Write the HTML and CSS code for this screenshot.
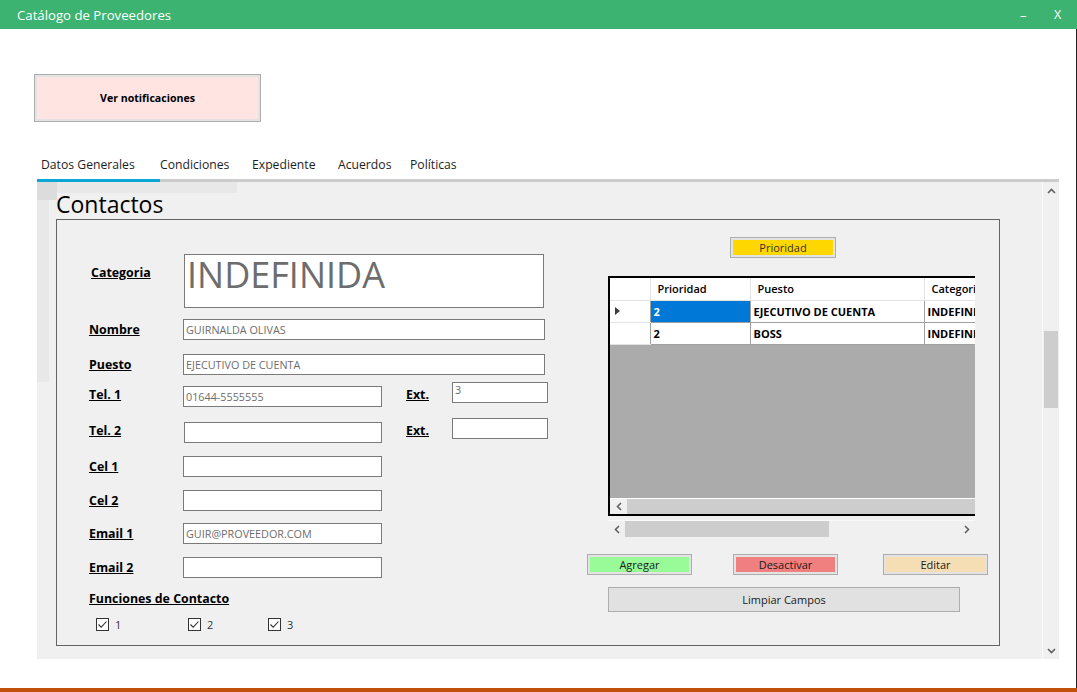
FILE: index.html
```html
<!DOCTYPE html>
<html lang="es">
<head>
<meta charset="utf-8">
<title>Catálogo de Proveedores</title>
<link rel="stylesheet" href="styles.css">
</head>
<body>
<div class="window">
  <header class="titlebar">
    <span class="title">Catálogo de Proveedores</span>
    <span class="win-min">–</span>
    <span class="win-close">X</span>
  </header>
  <main class="client">
    <button class="btn notif">Ver notificaciones</button>
    <nav class="tabs">
      <span class="tab tab-1 active">Datos Generales</span>
      <span class="tab tab-2">Condiciones</span>
      <span class="tab tab-3">Expediente</span>
      <span class="tab tab-4">Acuerdos</span>
      <span class="tab tab-5">Políticas</span>
    </nav>
    <section class="tabpage">
      <div class="page">
        <h2 class="group-title">Contactos</h2>
        <div class="groupbox">
          <div class="form">
            <div class="row row-cat">
              <span class="lbl lbl-cat">Categoria</span>
              <div class="catbox">INDEFINIDA</div>
            </div>
            <div class="row r-nombre">
              <span class="lbl">Nombre</span>
              <div class="input w-long">GUIRNALDA OLIVAS</div>
            </div>
            <div class="row r-puesto">
              <span class="lbl">Puesto</span>
              <div class="input w-long">EJECUTIVO DE CUENTA</div>
            </div>
            <div class="row row-tel r-tel1">
              <span class="lbl">Tel. 1</span>
              <div class="input w-short tel">01644-5555555</div>
              <span class="lbl lbl-ext">Ext.</span>
              <div class="input w-ext">3</div>
            </div>
            <div class="row row-tel r-tel2">
              <span class="lbl">Tel. 2</span>
              <div class="input w-short tel tel2"></div>
              <span class="lbl lbl-ext">Ext.</span>
              <div class="input w-ext"></div>
            </div>
            <div class="row r-cel1">
              <span class="lbl">Cel 1</span>
              <div class="input w-short"></div>
            </div>
            <div class="row r-cel2">
              <span class="lbl">Cel 2</span>
              <div class="input w-short"></div>
            </div>
            <div class="row r-email1">
              <span class="lbl">Email 1</span>
              <div class="input w-short">GUIR@PROVEEDOR.COM</div>
            </div>
            <div class="row r-email2">
              <span class="lbl">Email 2</span>
              <div class="input w-short"></div>
            </div>
            <div class="funciones">Funciones de Contacto</div>
            <div class="checks">
              <label class="chk chk-1"><span class="box"><svg width="11" height="11" viewBox="0 0 11 11"><path d="M1.5 5.5 L4.2 8.2 L9.5 2.5" fill="none" stroke="#333" stroke-width="1.1"/></svg></span>1</label>
              <label class="chk chk-2"><span class="box"><svg width="11" height="11" viewBox="0 0 11 11"><path d="M1.5 5.5 L4.2 8.2 L9.5 2.5" fill="none" stroke="#333" stroke-width="1.1"/></svg></span>2</label>
              <label class="chk chk-3"><span class="box"><svg width="11" height="11" viewBox="0 0 11 11"><path d="M1.5 5.5 L4.2 8.2 L9.5 2.5" fill="none" stroke="#333" stroke-width="1.1"/></svg></span>3</label>
            </div>
          </div>
          <div class="side">
            <button class="btn prioridad">Prioridad</button>
            <div class="grid">
              <table class="dgv">
                <colgroup><col class="c-rh"><col class="c-pri"><col class="c-pue"><col class="c-cat"></colgroup>
                <thead>
                  <tr><th class="rh"></th><th>Prioridad</th><th>Puesto</th><th>Categoria</th></tr>
                </thead>
                <tbody>
                  <tr><td class="rh"><svg width="5" height="8" viewBox="0 0 5 8"><path d="M0 0 L5 4 L0 8 Z" fill="#3c3c3c"/></svg></td><td class="sel">2</td><td>EJECUTIVO DE CUENTA</td><td>INDEFINIDA</td></tr>
                  <tr><td class="rh"></td><td>2</td><td>BOSS</td><td>INDEFINIDA</td></tr>
                </tbody>
              </table>
              <div class="grid-fill"></div>
              <div class="hscroll inner">
                <span class="arrow"><svg width="6" height="9" viewBox="0 0 6 9"><path d="M5 1 L1.5 4.5 L5 8" fill="none" stroke="#606060" stroke-width="1.6"/></svg></span>
                <span class="thumb thumb-inner"></span>
              </div>
            </div>
            <div class="hscroll outer">
              <span class="arrow"><svg width="6" height="9" viewBox="0 0 6 9"><path d="M5 1 L1.5 4.5 L5 8" fill="none" stroke="#606060" stroke-width="1.6"/></svg></span>
              <span class="thumb thumb-outer"></span>
              <span class="track"></span>
              <span class="arrow"><svg width="6" height="9" viewBox="0 0 6 9"><path d="M1 1 L4.5 4.5 L1 8" fill="none" stroke="#606060" stroke-width="1.6"/></svg></span>
            </div>
            <div class="actions">
              <button class="btn act agregar">Agregar</button>
              <button class="btn act desactivar">Desactivar</button>
              <button class="btn act editar">Editar</button>
            </div>
            <button class="btn limpiar">Limpiar Campos</button>
          </div>
        </div>
      </div>
      <div class="vscroll">
        <span class="varrow"><svg width="9" height="6" viewBox="0 0 9 6"><path d="M1 5 L4.5 1.5 L8 5" fill="none" stroke="#606060" stroke-width="1.6"/></svg></span>
        <span class="vthumb"></span>
        <span class="vtrack"></span>
        <span class="varrow"><svg width="9" height="6" viewBox="0 0 9 6"><path d="M1 1 L4.5 4.5 L8 1" fill="none" stroke="#606060" stroke-width="1.6"/></svg></span>
      </div>
    </section>
  </main>
  <div class="bottom-bar"></div>
</div>
</body>
</html>
```

FILE: styles.css
```css
* { box-sizing: border-box; }
html, body { margin: 0; padding: 0; }
body {
  width: 1077px;
  height: 692px;
  overflow: hidden;
  background: #ffffff;
  font-family: "Open Sans", "Noto Sans", sans-serif;
  color: #000;
}
.window { display: flex; flex-direction: column; height: 692px; }

.titlebar {
  flex: none;
  height: 29px;
  background: #3cb371;
  color: #fff;
  display: flex;
  align-items: center;
  padding-left: 17px;
  font-size: 13.2px;
}
.title { flex: 1; }
.win-min { width: 34px; font-size: 13px; }
.win-close { width: 23px; font-size: 12.5px; }

.client {
  flex: 1;
  display: flex;
  flex-direction: column;
  align-items: flex-start;
  border-right: 1px solid #222;
}
.bottom-bar { flex: none; height: 4px; background: #c0500a; }

.btn {
  font-family: "Open Sans", "Noto Sans", sans-serif;
  font-size: 11px;
  color: #1a1a1a;
  border: 1px solid #adadad;
  box-shadow: inset 0 0 0 2px #e3e3e3;
  padding: 0;
  margin: 0;
  line-height: 1;
}
.notif {
  margin: 45px 0 0 34px;
  width: 227px;
  height: 48px;
  background: #ffe4e1;
  font-weight: bold;
  font-size: 10.6px;
  color: #000;
}

.tabs {
  margin: 28px 0 0 37px;
  width: 1022px;
  height: 32px;
  display: flex;
  border-bottom: 3px solid #cccccc;
}
.tab { font-size: 12.2px; color: #1e1e1e; line-height: 29px; height: 29px; }
.tab.active { height: 32px; border-bottom: 3px solid #0aa6d6; margin-bottom: -3px; padding-left: 4px; }
.tab-1 { width: 123px; }
.tab-2 { width: 92px; }
.tab-3 { width: 86px; }
.tab-4 { width: 72px; }
.tab-5 { width: 60px; }

.tabpage {
  margin-left: 37px;
  width: 1022px;
  height: 477px;
  display: flex;
  background:
    linear-gradient(#dcdcdc, #dcdcdc) 0 0 / 20px 18px no-repeat,
    linear-gradient(#e8e8e8, #e8e8e8) 0 0 / 200px 11px no-repeat,
    linear-gradient(#e8e8e8, #e8e8e8) 0 0 / 12px 200px no-repeat,
    #f0f0f0;
}
.page { flex: 1; }
.group-title {
  margin: 0;
  height: 37px;
  padding: 0 0 3px 19px;
  display: flex;
  align-items: flex-end;
  font-size: 23px;
  font-weight: normal;
  line-height: 1;
  color: #000;
}
.groupbox {
  margin-left: 19px;
  width: 944px;
  height: 427px;
  border: 1px solid #646464;
  display: flex;
}

.form { width: 530px; flex: none; padding: 34px 0 0 32px; }
.row { display: flex; align-items: center; }
.lbl {
  flex: none;
  width: 94px;
  font-size: 12.4px;
  font-weight: bold;
  text-decoration: underline;
  line-height: 16px;
  color: #000;
}
.row-cat { align-items: flex-start; }
.lbl-cat { padding-top: 11px; padding-left: 2px; }
.catbox {
  margin-left: 1px;
  width: 360px;
  height: 54px;
  border: 1px solid #7a7a7a;
  background: #fff;
  color: #6d6d6d;
  font-size: 36px;
  line-height: 1;
  padding: 2px 0 0 2px;
}
.input {
  flex: none;
  height: 21px;
  border: 1px solid #7a7a7a;
  background: #fff;
  color: #6d6d6d;
  font-size: 10.8px;
  line-height: 19px;
  padding-left: 2px;
}
.w-long { width: 362px; }
.w-short { width: 199px; }
.w-ext { width: 96px; align-self: flex-start; height: 21px; line-height: 14px; }
.row-tel { height: 25px; }
.tel { align-self: flex-end; }
.tel2 { margin-left: 1px; width: 198px; }
.lbl-ext { width: 46px; margin-left: 24px; }
.r-nombre { margin-top: 11px; }
.r-puesto { margin-top: 14px; }
.r-tel1 { margin-top: 7px; }
.r-tel2 { margin-top: 11px; }
.r-cel1 { margin-top: 13px; }
.r-cel2 { margin-top: 13px; }
.r-email1 { margin-top: 12px; }
.r-email2 { margin-top: 13px; }
.funciones {
  margin-top: 13px;
  font-size: 12.4px;
  font-weight: bold;
  text-decoration: underline;
  line-height: 16px;
}
.checks { margin-top: 11px; display: flex; padding-left: 7px; height: 13px; }
.chk { display: flex; align-items: center; font-size: 11px; color: #333; line-height: 13px; }
.chk-1 { width: 92px; }
.chk-2 { width: 80px; }
.box {
  width: 13px;
  height: 13px;
  border: 1px solid #333;
  background: #fff;
  margin-right: 6px;
  display: flex;
}

.side { flex: 1; display: flex; flex-direction: column; align-items: flex-start; padding-top: 17px; }
.prioridad {
  margin-left: 143px;
  width: 106px;
  height: 21px;
  background: #ffd700;
  color: #333;
}
.grid {
  margin: 18px 0 0 21px;
  width: 367px;
  height: 240px;
  border-top: 2px solid #000;
  border-left: 2px solid #000;
  border-bottom: 2px solid #000;
  display: flex;
  flex-direction: column;
  overflow: hidden;
}
.dgv {
  flex: none;
  width: 470px;
  table-layout: fixed;
  border-collapse: collapse;
  background: #fff;
  font-size: 11px;
}
.c-rh { width: 40px; }
.c-pri { width: 100px; }
.c-pue { width: 174px; }
.c-cat { width: 156px; }
.dgv th {
  height: 22px;
  text-align: left;
  font-weight: 600;
  padding: 0 0 0 7px;
  border-right: 1px solid #e3e3e3;
  border-bottom: 1px solid #e3e3e3;
  white-space: nowrap;
}
.dgv td {
  height: 22px;
  font-weight: bold;
  padding: 0 0 0 3px;
  border-right: 1px solid #a0a0a0;
  border-bottom: 1px solid #a0a0a0;
  white-space: nowrap;
  overflow: hidden;
}
.dgv .rh { padding: 0 0 0 5px; border-right: 1px solid #a0a0a0; border-bottom: 1px solid #e3e3e3; }
.dgv th.rh { border-right: 1px solid #e3e3e3; }
.dgv td.rh svg { display: block; }
.dgv td.sel { background: #0078d7; color: #fff; }
.grid-fill { flex: 1; background: #ababab; border-bottom: 1px solid #fff; }

.hscroll { display: flex; align-items: stretch; background: #f0f0f0; }
.hscroll.inner { flex: none; height: 15px; }
.hscroll.outer { margin: 4px 0 0 21px; width: 367px; height: 17px; border-top: 1px solid #fafafa; }
.arrow { width: 17px; flex: none; display: flex; align-items: center; justify-content: center; }
.thumb { background: #cdcdcd; }
.thumb-inner { flex: 1; }
.thumb-outer { width: 204px; }
.track { flex: 1; }

.actions { margin-top: 17px; display: flex; }
.act { width: 105px; height: 21px; }
.agregar { background: #98fb98; }
.desactivar { background: #f08080; margin-left: 41px; }
.editar { background: #f5deb3; margin-left: 45px; }
.limpiar {
  margin: 12px 0 0 21px;
  width: 352px;
  height: 25px;
  background: #e1e1e1;
  box-shadow: none;
}

.vscroll {
  flex: none;
  width: 17px;
  display: flex;
  flex-direction: column;
  border-left: 1px solid #f8f8f8;
}
.varrow { height: 17px; flex: none; display: flex; align-items: center; justify-content: center; }
.vthumb { margin: 132px 1px 0 1px; height: 77px; background: #cdcdcd; flex: none; }
.vtrack { flex: 1; }
```
